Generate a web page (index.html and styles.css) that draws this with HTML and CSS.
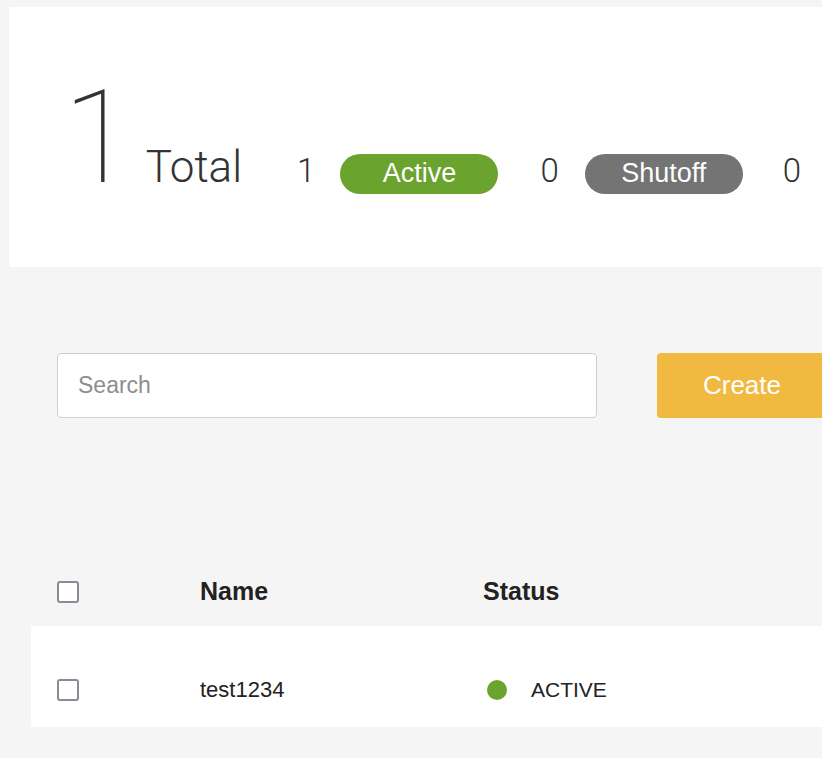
FILE: index.html
```html
<!DOCTYPE html>
<html>
<head>
<meta charset="utf-8">
<link rel="stylesheet" href="styles.css">
</head>
<body>
<section class="summary">
  <span class="big">1</span>
  <span class="total">Total</span>
  <span class="count c1">1</span>
  <span class="badge active">Active</span>
  <span class="count c2">0</span>
  <span class="badge shutoff">Shutoff</span>
  <span class="count c3">0</span>
</section>
<div class="toolbar">
  <input class="search" type="text" placeholder="Search">
  <button class="create">Create</button>
</div>
<div class="table">
  <div class="row head">
    <span class="cb"></span>
    <span class="cell name">Name</span>
    <span class="cell status">Status</span>
  </div>
  <div class="row item">
    <span class="cb"></span>
    <span class="cell name">test1234</span>
    <span class="cell status"><span class="dot"></span>ACTIVE</span>
  </div>
</div>
</body>
</html>
```
FILE: styles.css
```css
html, body { margin: 0; padding: 0; }
body {
  background: #f5f5f5;
  font-family: "Liberation Sans", Arial, sans-serif;
  color: #222;
  width: 822px;
  height: 758px;
  overflow: hidden;
}
.summary {
  margin: 7px 0 0 9px;
  height: 260px;
  background: #fff;
  display: flex;
  align-items: baseline;
  padding: 0 0 0 54px;
  box-sizing: border-box;
  white-space: nowrap;
  overflow: hidden;
}
.big {
  font-family: Roboto, "Liberation Sans", sans-serif;
  font-weight: 100;
  font-size: 129px;
  line-height: 1;
  margin-top: 66px;
  color: #333;
}
.total {
  font-family: Roboto, "Liberation Sans", sans-serif;
  font-weight: 300;
  font-size: 44px;
  margin-left: 12px;
  color: #333;
}
.count {
  font-family: Roboto, "Liberation Sans", sans-serif;
  font-weight: 300;
  font-size: 33px;
  color: #333;
}
.c1 { margin-left: 55px; margin-right: 25px; }
.c2 { margin-left: 42px; margin-right: 26px; }
.c3 { margin-left: 40px; }
.badge {
  display: inline-block;
  flex: none;
  width: 158px;
  height: 40px;
  line-height: 38px;
  border-radius: 20px;
  color: #fff;
  text-align: center;
  font-size: 27px;
  box-sizing: border-box;
}
.active { background: #6ba32f; }
.shutoff { background: #747474; }
.toolbar {
  display: flex;
  margin: 86px 0 0 57px;
  gap: 60px;
  width: 800px;
}
.search {
  flex: none;
  width: 540px;
  height: 65px;
  box-sizing: border-box;
  border: 1px solid #cfcfcf;
  border-radius: 4px;
  background: #fff;
  padding: 0 20px;
  font-family: "Liberation Sans", Arial, sans-serif;
  font-size: 23px;
  outline: none;
  margin: 0;
}
.search::placeholder { color: #8e8e8e; }
.create {
  width: 170px;
  height: 65px;
  flex: none;
  border: none;
  border-radius: 4px;
  background: #f2b940;
  color: #fff;
  font-family: "Liberation Sans", Arial, sans-serif;
  font-size: 26px;
  padding: 0;
  margin: 0;
}
.table {
  margin: 141px 0 0 31px;
}
.row {
  display: grid;
  grid-template-columns: 143px 283px 1fr;
  align-items: center;
  padding-left: 26px;
}
.head {
  height: 67px;
  padding-bottom: 2px;
  box-sizing: border-box;
}
.head .cell {
  font-weight: bold;
  font-size: 25px;
  color: #222;
}
.item {
  background: #fff;
  height: 101px;
  padding-top: 26px;
  box-sizing: border-box;
}
.item .cell {
  font-size: 22px;
  color: #222;
}
.item .status { font-size: 21px; }
.cb {
  width: 22px;
  height: 22px;
  box-sizing: border-box;
  border: 2px solid #8b8b97;
  border-radius: 3px;
  background: #fff;
}
.status { display: flex; align-items: center; }
.item .status { padding-left: 4px; }
.dot {
  width: 20px;
  height: 20px;
  border-radius: 50%;
  background: #6ba32f;
  margin-right: 24px;
}
```
